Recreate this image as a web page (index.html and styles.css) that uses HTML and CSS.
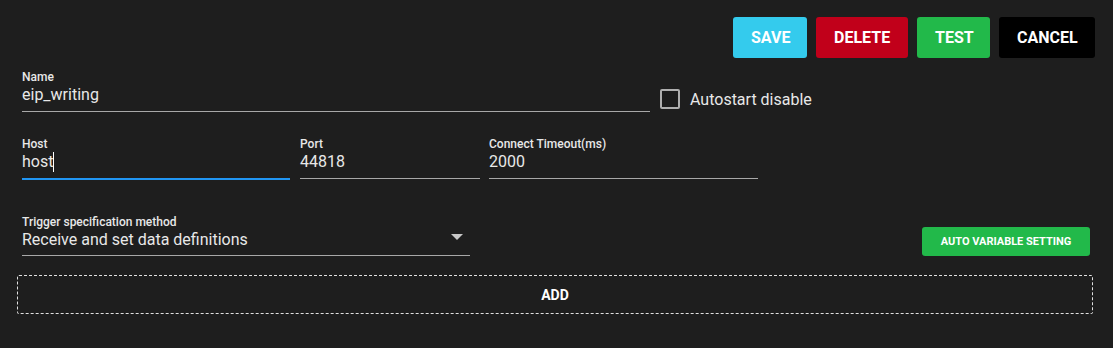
FILE: index.html
```html
<!DOCTYPE html>
<html lang="en">
<head>
    <meta charset="UTF-8">
    <meta name="viewport" content="width=device-width, initial-scale=1.0">
    <title>EIP Writing</title>
    <link rel="stylesheet" href="styles.css">
</head>
<body>
    <div class="panel">
        <!-- top actions -->
        <div class="toolbar">
            <button class="btn btn-save">SAVE</button>
            <button class="btn btn-delete">DELETE</button>
            <button class="btn btn-test">TEST</button>
            <button class="btn btn-cancel">CANCEL</button>
        </div>

        <div class="row row-name">
            <div class="field field-name">
                <label class="field-label">Name</label>
                <div class="field-value">eip_writing</div>
            </div>
            <label class="check">
                <span class="check-box"></span>
                Autostart disable
            </label>
        </div>

        <div class="row row-conn">
            <div class="field field-host focused">
                <label class="field-label">Host</label>
                <div class="field-value">host<span class="caret"></span></div>
            </div>
            <div class="field field-port">
                <label class="field-label">Port</label>
                <div class="field-value">44818</div>
            </div>
            <div class="field field-timeout">
                <label class="field-label">Connect Timeout(ms)</label>
                <div class="field-value">2000</div>
            </div>
        </div>

        <div class="row row-trigger">
            <div class="field field-trigger">
                <label class="field-label">Trigger specification method</label>
                <div class="field-value select">Receive and set data definitions</div>
            </div>
            <button class="btn-small">AUTO VARIABLE SETTING</button>
        </div>

        <button class="add-box">ADD</button>
    </div>
</body>
</html>
```

FILE: styles.css
```css
* {
    margin: 0;
    padding: 0;
    box-sizing: border-box;
}

body {
    background-color: #1e1e1e;
    font-family: Roboto, "Liberation Sans", Arial, sans-serif;
    color: #e6e6e6;
}

.panel {
    padding: 17px 18px 0 18px;
}

.toolbar {
    display: flex;
    justify-content: flex-end;
    gap: 9px;
}

.btn {
    height: 41px;
    padding: 0 18px;
    border: none;
    border-radius: 3px;
    color: #fff;
    font-family: inherit;
    font-size: 16px;
    font-weight: 700;
    cursor: pointer;
}
.btn-save { background-color: #34cbed; width: 74px; }
.btn-delete { background-color: #c1001a; width: 92px; }
.btn-test { background-color: #22b94a; width: 73px; }
.btn-cancel { background-color: #000; width: 96px; }

.row {
    display: flex;
    padding-left: 4px;
}

.row-name {
    margin-top: 12px;
}
.row-conn {
    margin-top: 25px;
}
.row-trigger {
    margin-top: 35px;
    align-items: flex-end;
}

.field {
    display: flex;
    flex-direction: column;
}
.field-label {
    font-size: 12px;
    line-height: 14px;
    font-weight: 500;
    color: #e8e8e8;
}
.field-value {
    position: relative;
    font-size: 16px;
    line-height: 19px;
    padding: 1px 0 7px 0;
    border-bottom: 1px solid #a8a8a8;
    color: #e8e8e8;
}
.focused .field-value {
    border-bottom: 2px solid #2196f3;
    padding-bottom: 6px;
}
.caret {
    display: inline-block;
    width: 1px;
    height: 20px;
    background-color: #fff;
    vertical-align: -5px;
}

.field-name { width: 628px; }
.field-host { width: 268px; }
.field-port { width: 180px; margin-left: 10px; }
.field-timeout { width: 269px; margin-left: 9px; }
.field-trigger { width: 448px; }

.select {
    padding-bottom: 6px;
}
.select::after {
    content: "";
    position: absolute;
    right: 7px;
    top: 5px;
    border-left: 6px solid transparent;
    border-right: 6px solid transparent;
    border-top: 6px solid #c8c8c8;
}

.check {
    display: flex;
    align-items: center;
    gap: 10px;
    margin-left: 10px;
    align-self: flex-end;
    padding-bottom: 3px;
    font-size: 16px;
    color: #e8e8e8;
}
.check-box {
    width: 20px;
    height: 20px;
    border: 2px solid #b0b0b0;
    border-radius: 2px;
}

.btn-small {
    margin-left: auto;
    margin-right: 5px;
    height: 29px;
    width: 168px;
    border: none;
    border-radius: 3px;
    background-color: #22b94a;
    color: #fff;
    font-family: inherit;
    font-size: 11px;
    font-weight: 700;
}

.add-box {
    display: block;
    width: calc(100% - 1px);
    margin: 19px 0 0 -1px;
    height: 39px;
    background: transparent;
    border: 1px dashed #e0e0e0;
    border-radius: 2px;
    color: #fff;
    font-family: inherit;
    font-size: 14px;
    font-weight: 700;
}
```
